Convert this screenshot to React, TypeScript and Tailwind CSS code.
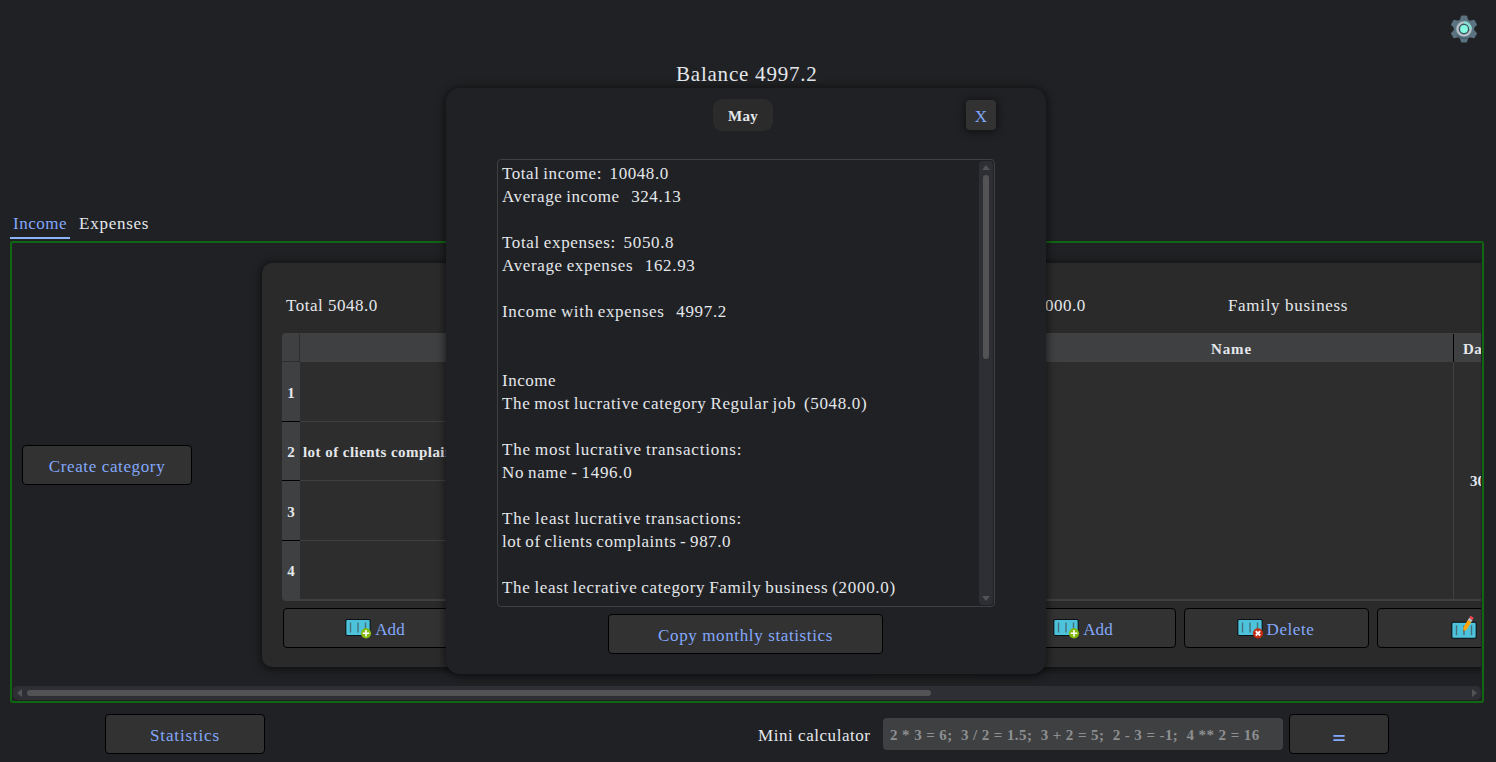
import type { ReactNode } from "react";

const STATS = [
  ["Total income:  10048.0", "tracking-[0.56px]"],
  ["Average income   324.13", "tracking-[0.58px]"],
  ["", ""],
  ["Total expenses:  5050.8", "tracking-[0.65px]"],
  ["Average expenses   162.93", "tracking-[0.64px]"],
  ["", ""],
  ["Income with expenses   4997.2", "tracking-[0.67px]"],
  ["", ""],
  ["", ""],
  ["Income", "tracking-[0.5px]"],
  ["The most lucrative category Regular job  (5048.0)", "tracking-[0.64px]"],
  ["", ""],
  ["The most lucrative transactions:", "tracking-[0.8px]"],
  ["No name - 1496.0", "tracking-[0.66px]"],
  ["", ""],
  ["The least lucrative transactions:", "tracking-[0.83px]"],
  ["lot of clients complaints - 987.0", "tracking-[0.54px]"],
  ["", ""],
  ["The least lecrative category Family business (2000.0)", "tracking-[0.675px]"],
];

function Gear() {
  return (
    <svg viewBox="0 0 28 28" className="h-7 w-7">
      <g fill="#5b7280">
        {[0, 60, 120, 180, 240, 300].map((a) => (
          <path key={a} d="M9.500 6 L11 .9 Q11.200 .4 12 .4 H16 Q16.800 .4 17 .9 L18.500 6 Z" transform={`rotate(${a} 14 14)`} />
        ))}
        <circle cx="14" cy="14" r="10.3" />
      </g>
      <path d="M6 20 A10 10 0 0 0 18 23.500 L14 18 Z" fill="#4a6272" />
      <circle cx="14" cy="14" r="6.600" fill="#3f5563" stroke="#b4c0c6" strokeWidth="2.400" />
      <path d="M14 7.400 A6.600 6.600 0 0 1 20.600 14" fill="none" stroke="#84ddd0" strokeWidth="2.400" />
      <circle cx="14" cy="14" r="3.900" fill="#84fbe0" />
    </svg>
  );
}

function TableIcon({ kind }: { kind: "add" | "delete" | "edit" }) {
  const dy = kind === "edit" ? 2.7 : 0;
  return (
    <svg viewBox="0 0 28 24" className="h-6 w-7 shrink-0 overflow-visible">
      <g transform={`translate(0 ${dy})`}>
        <rect x="0.800" y="3.500" width="24.400" height="16" rx="1.500" fill="#4ec3dc" stroke="#0b1114" strokeWidth="1.100" />
        <path d="M5.500 6.500V16.500M13 6.500V16.500M20.500 6.500V16.500" stroke="#48707c" strokeWidth="1.400" />
      </g>
      {kind === "add" && (
        <g>
          <circle cx="21" cy="17.300" r="5.100" fill="#84b90b" />
          <path d="M21 14V20.600M17.700 17.300H24.300" stroke="#fff" strokeWidth="1.600" />
        </g>
      )}
      {kind === "delete" && (
        <g>
          <circle cx="21" cy="17.300" r="5.100" fill="#c52c14" />
          <path d="M18.800 15.100L23.200 19.500M23.200 15.100L18.800 19.500" stroke="#fff" strokeWidth="1.800" />
        </g>
      )}
      {kind === "edit" && (
        <g transform="translate(12.300 15.500) rotate(31)">
          <path d="M0 0L-2 -3.500V-12.500H2V-3.500Z" fill="#ffa50a" />
          <path d="M0 0L-0.800 -1.500H0.800Z" fill="#6b4a22" />
          <rect x="-2" y="-14.700" width="4" height="2.400" fill="#b8c4cc" />
          <rect x="-2" y="-17.200" width="4" height="2.700" rx="1" fill="#f24750" />
        </g>
      )}
    </svg>
  );
}

function Button({ className, children }: { className: string; children: ReactNode }) {
  return (
    <button
      className={`flex h-10 shrink-0 items-center justify-center rounded-[4px] border border-black bg-[#323232] text-[17px] text-[#83a8fa] ${className}`}
    >
      {children}
    </button>
  );
}

function CardButtons() {
  return (
    <div className="ml-[21px] mt-[7px] flex gap-2">
      <Button className="w-[185px] gap-0.5 pr-px tracking-[0.100px]"><TableIcon kind="add" /><span className="pt-[3px]">Add</span></Button>
      <Button className="w-[185px] gap-0.5 pr-0.5 tracking-[0.600px]"><TableIcon kind="delete" /><span className="pt-[3px]">Delete</span></Button>
      <Button className="w-[185px] pr-[9px]"><TableIcon kind="edit" /></Button>
    </div>
  );
}

type CardProps = { total: string; title?: string; rows: string[]; date?: string; className: string };

function Card({ total, title, rows, date, className }: CardProps) {
  return (
    <section className={`h-[404px] w-[613px] shrink-0 rounded-[10px] bg-[#2a2a2a] shadow-[0_1px_8px_1px_rgba(0,0,0,0.6)] ${className}`}>
      <div className="flex h-[70px] items-end pb-[16px] pl-6 text-[17px] leading-[23px] tracking-[0.500px]">
        <span className="w-[234px]">{total}</span>
        <span className="tracking-[0.670px]">{title}</span>
      </div>
      <div className="ml-5 flex h-[268px] w-[573px] flex-col overflow-hidden rounded-[4px] border-b-2 border-[#3f4042] bg-[#2d2d2d] text-[15px] font-bold">
        <div className="flex h-[29px] shrink-0 bg-[#3f4042]">
          <div className="mt-px w-[18px] border-r border-b border-[#2d2d2d]" />
          <div className="flex w-[445px] items-center justify-center pt-1 pl-0.5 tracking-[0.900px]">Name</div>
          <div className="mt-px border-l border-black pl-[9px] pt-[5px] leading-5 tracking-[0.300px]">Date</div>
        </div>
        <div className="flex min-h-0 flex-1">
          <div className="flex w-[18px] flex-col bg-[#3f4042]">
            {rows.map((_, i) => (
              <div key={i} className="flex flex-1 items-center justify-center border-b border-black pt-[3px] last:border-0">{i + 1}</div>
            ))}
          </div>
          <div className="flex w-[445px] flex-col">
            {rows.map((r, i) => (
              <div key={i} className="flex flex-1 items-center whitespace-nowrap border-b border-[#3f4042] pl-[3px] pt-0.5 tracking-[0.450px] last:border-0">{r}</div>
            ))}
          </div>
          {date && <div className="flex flex-1 items-center border-l border-[#3f4042] pl-4 pt-0.5">{date}</div>}
        </div>
      </div>
      <CardButtons />
    </section>
  );
}

export default function App() {
  return (
    <div className="relative flex h-[762px] w-[1496px] flex-col overflow-hidden bg-[#202124] font-['Liberation_Serif',serif] text-[17px] text-[#e4e7eb]">
      <header className="flex h-[59px] justify-end pr-[18px] pt-[15px]"><Gear /></header>
      <h1 className="h-[151px] pl-[676px] text-[21px] leading-[30px] tracking-[0.780px]">Balance 4997.2</h1>
      <nav className="flex h-[29px] shrink-0 pl-2.5 leading-[27px]">
        <div className="w-[60px] border-b-2 border-[#8ab4f7] pl-[3px] tracking-[0.500px] text-[#83a8fa]">Income</div>
        <div className="pl-[9px] tracking-[0.750px]">Expenses</div>
      </nav>
      <main className="ml-2.5 mt-0.5 flex h-[462px] w-[1474px] shrink-0 flex-col rounded-[3px] border-2 border-[#116611] px-px">
        <div className="flex h-[443px] shrink-0 overflow-hidden">
          <div className="flex w-[249px] shrink-0 pl-[9px] pt-[202px]">
            <Button className="w-[170px] tracking-[0.630px]"><span className="pt-[3px]">Create category</span></Button>
          </div>
          <Card className="mt-5" total="Total 5048.0" rows={["", "lot of clients complaints", "", ""]} />
          <Card className="ml-[95px] mt-5" total="Total 2000.0" title="Family business" rows={[""]} date="30.05.2023" />
        </div>
        <div className="flex h-3.5 items-center justify-between rounded-[5px] bg-[#2e2f34] px-1">
          <svg className="h-2 w-1.5" viewBox="0 0 6 8"><path d="M5 0V8L0 4Z" fill="#535355" /></svg>
          <div className="ml-1 mr-auto h-1.5 w-[904px] rounded-full bg-[#535355]" />
          <svg className="h-2 w-1.5" viewBox="0 0 6 8"><path d="M1 0V8L6 4Z" fill="#535355" /></svg>
        </div>
      </main>
      <footer className="flex h-[59px] shrink-0 pl-[105px] pt-[11px]">
        <Button className="w-40 tracking-[0.850px]"><span className="pt-[3px]">Statistics</span></Button>
        <span className="ml-[493px] w-[125px] leading-[44px] tracking-[0.550px]">Mini calculator</span>
        <div className="mt-1 h-8 w-[400px] whitespace-pre rounded-[4px] bg-[#3f4042] pl-[7px] text-[15px] font-bold leading-[34px] tracking-[0.410px] text-[#8d8f91]">{"2 * 3 = 6;  3 / 2 = 1.5;  3 + 2 = 5;  2 - 3 = -1;  4 ** 2 = 16"}</div>
        <Button className="ml-1.5 w-[100px]"><span className="pt-2 text-[24px] font-bold">=</span></Button>
      </footer>

      <div role="dialog" className="absolute left-[446px] top-[88px] flex h-[586px] w-[600px] flex-col rounded-[14px] bg-[#202124] shadow-[0_1px_8px_1px_rgba(0,0,0,0.6)]">
        <div className="flex h-[71px] pl-[267px] pt-[11px]">
          <div className="flex h-8 w-[60px] items-center justify-center rounded-[9px] bg-[#2b2b2b] pt-0.5 text-[15px] font-bold tracking-[0.300px]">May</div>
          <button className="ml-[193px] mt-px flex size-[30px] items-center justify-center rounded-[4px] bg-[#323232] pt-[3px] text-[#83a8fa] shadow-[0_1px_8px_1px_rgba(0,0,0,0.5)]">X</button>
        </div>
        <div className="ml-[51px] flex h-[448px] w-[498px] rounded-[4px] border border-[#3f4042] py-px pl-1 pr-px">
          <div className="w-[477px] overflow-hidden pt-px">
            {STATS.map(([line, tracking], i) => (
              <div key={i} className={`h-[23px] whitespace-pre leading-[24px] [word-spacing:-1px] ${tracking}`}>{line}</div>
            ))}
          </div>
          <div className="flex w-3.5 flex-col items-center rounded-[4px] bg-[#2e2f34] py-1">
            <svg className="h-[5px] w-2" viewBox="0 0 8 5"><path d="M0 5H8L4 0Z" fill="#535355" /></svg>
            <div className="mb-auto mt-[5px] h-[184px] w-1.5 rounded-full bg-[#535355]" />
            <svg className="h-[5px] w-2" viewBox="0 0 8 5"><path d="M0 0H8L4 5Z" fill="#535355" /></svg>
          </div>
        </div>
        <Button className="ml-[162px] mt-[7px] w-[275px] tracking-[0.620px]"><span className="pt-[3px]">Copy monthly statistics</span></Button>
      </div>
    </div>
  );
}
